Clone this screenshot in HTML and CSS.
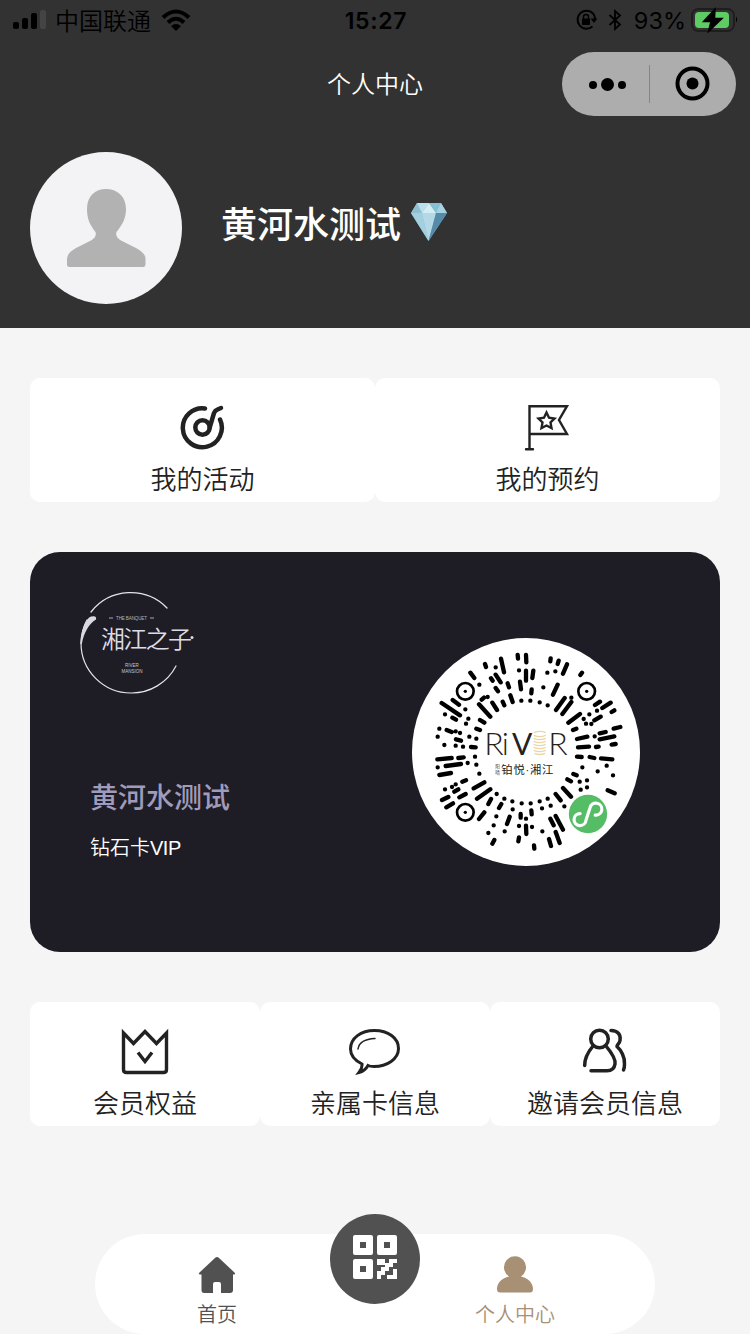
FILE: index.html
```html
<!DOCTYPE html>
<html lang="zh-CN">
<head>
<meta charset="utf-8">
<title>个人中心</title>
<link rel="stylesheet" href="styles.css">
</head>
<body>
<header class="header">
  <div class="status">
    <div class="status-left">
      <svg class="signal" width="34" height="20" viewBox="0 0 34 20"><rect x="0" y="12" width="6" height="7" rx="2"/><rect x="9" y="8" width="6" height="11" rx="2"/><rect x="18" y="3" width="6" height="16" rx="2"/><rect x="27" y="0" width="6" height="19" rx="2" fill="#444"/></svg>
      <span class="carrier">中国联通</span>
      <svg class="wifi" width="30" height="22" viewBox="0 0 30 22"><g fill="none" stroke="#000" stroke-width="4"><path d="M2 8.500Q15-3.500 28 8.500"/><path d="M7 13.500Q15 6 23 13.500"/></g><path d="M10 17Q15 13 20 17L15 22Z"/></svg>
    </div>
    <div class="time">15:27</div>
    <div class="status-right">
      <svg width="22" height="22" viewBox="0 0 22 22"><path d="M16.500 17.500A9 9 0 1 1 17.500 5Q19 7 19 10" fill="none" stroke="#000" stroke-width="2"/><path d="M14.500 9.500h7L18 14Z"/><rect x="6" y="9.500" width="8" height="6.500" rx="1"/><path d="M7.500 10V8a2.500 2.500 0 0 1 5 0v2" fill="none" stroke="#000" stroke-width="1.500"/></svg>
      <svg class="bluetooth" width="14" height="22" viewBox="0 0 14 22"><path d="M1.500 6L12 15.500 7 20V2l5 4.500L1.500 16" fill="none" stroke="#000" stroke-width="1.800"/></svg>
      <span class="percent">93%</span>
      <svg width="48" height="26" viewBox="0 0 48 26"><rect x="1" y="2" width="42" height="22" rx="6.500" fill="none" stroke="#1e1e1e" stroke-width="2"/><rect x="4" y="5" width="34" height="16" rx="4" fill="#5fcb64"/><path d="M45 9.500q2.500 3 0 6Z"/><path d="M24 2L12.500 14.500H20L17.500 24.500 31 11.500H23.500Z" stroke="#000" stroke-width="1.500"/></svg>
    </div>
  </div>
  <div class="nav">
    <h1 class="nav-title">个人中心</h1>
    <div class="capsule">
      <svg width="174" height="64" viewBox="0 0 174 64"><circle cx="31" cy="33" r="4"/><circle cx="45.500" cy="32.500" r="6.500"/><circle cx="60" cy="33" r="4"/><path d="M87.500 13v38" stroke="#858585"/><circle cx="130.500" cy="31.500" r="15" fill="none" stroke="#000" stroke-width="4"/><circle cx="130.500" cy="31.500" r="6"/></svg>
    </div>
  </div>
  <div class="profile">
    <svg class="avatar" width="152" height="152" viewBox="0 0 152 152"><circle cx="76" cy="76" r="76" fill="#f3f3f6"/><path d="M37 113V107Q37 101 46 96L61 88.500Q67 85 65.500 80C60 73 57 67 57 57C57 44 65 37 76 37S96 44 96 57C96 67 92 73 86.500 80Q85 85 91 88.500L106 96Q115 101 115.500 106V112Q115.500 115 113 115H39.500Q37 115 37 113Z" fill="#b2b2b2"/></svg>
    <span class="user-name">黄河水测试</span>
    <svg class="diamond" width="38" height="40" viewBox="0 0 38 40"><path d="M7 1H31L37 11 18.500 39 1 11Z" fill="#80b5cc"/><path d="M7 1L1 11H12Z" fill="#91bfd2"/><path d="M7 1H19L12 11Z" fill="#b9dfeb"/><path d="M19 1L12 11H26Z" fill="#d2eef5"/><path d="M19 1H31L26 11Z" fill="#85bfd4"/><path d="M31 1L26 11H37Z" fill="#a6d2e1"/><path d="M1 11H12L18.500 39Z" fill="#a4cfe0"/><path d="M12 11H26L18.500 39Z" fill="#b4d8e5"/><path d="M26 11H37L18.500 39Z" fill="#558ba8"/></svg>
  </div>
</header>

<main class="content">
  <section class="menu">
    <a class="menu-item">
      <svg width="48" height="48" viewBox="0 0 48 48" class="line heavy"><path d="M26 5.400A19.500 19.500 0 1 0 41 16.500"/><circle cx="23.500" cy="24.500" r="7.200"/><path d="M30.700 24.500L35 10Q36 7.500 38.500 6.500L42 5"/></svg>
      <span>我的活动</span>
    </a>
    <a class="menu-item">
      <svg width="48" height="48" viewBox="0 0 48 48" class="line flag"><path d="M5.500 46V3.200H43L35 17 43 31H5.500M2 46.200H9"/><path d="M22.500 9.500L25 14.700 30.500 15.500 26.500 19.500 27.500 25 22.500 22.500 17.500 25 18.500 19.500 14.500 15.500 20 14.700Z"/></svg>
      <span>我的预约</span>
    </a>
  </section>

  <section class="card">
    <div class="card-info">
      <svg class="brand" width="120" height="106" viewBox="0 0 120 106">
        <g fill="none" stroke="#e5e4ec" stroke-linecap="round"><path d="M11 22A50.500 50.500 0 0 1 87 18" stroke-width="1.300"/><path d="M7 30A50 50 0 0 0 1 53A50 50 0 0 0 51 103A50 50 0 0 0 96 76" stroke-width="1.200"/></g>
        <path d="M.4 54C1 41 5 29 11 26.500Q17 25 16 29.500C9 34 4 42 1.800 54Z" fill="#d8d7e2"/>
        <path d="M29 28h4M70 28h4" stroke="#aaa9b4"/>
        <text x="36" y="29.800" class="brand-tiny" textLength="31">THE BANQUET</text>
        <text x="21" y="58" class="brand-name" textLength="91">湘江之子</text>
        <circle cx="112" cy="47.500" r="1.500" fill="#dddce6"/>
        <text x="52" y="77" class="brand-small" text-anchor="middle">RIVER</text>
        <text x="52" y="83" class="brand-small" text-anchor="middle">MANSION</text>
      </svg>
      <div class="member-name">黄河水测试</div>
      <div class="member-level">钻石卡<span class="vip">VIP</span></div>
    </div>
    <svg class="code" width="228" height="228" viewBox="21 24 684 684">
      <circle cx="363" cy="366" r="342" fill="#fff"/>
      <path class="marks" d="M338 75L339 86M363 75L364 97M437 85L436 94M461 92L458 102M486 103L474 131M240 102L243 111M288 86L297 127M272 112h.1M196 128L208 144M342 121h.1M363 122V152M385 122L382 144M427 128h.1M451 124h.1M531 128L526 135M272 134L287 157M258 145L263 152M223 164h.1M345 155L348 178M308 160L312 172M415 172h.1M458 164L444 194M380 178L379 190M272 174L279 184M316 196L323 216M230 209L237 203M248 201h.1M262 218L276 240M293 215L298 226M349 212h.1M376 212h.1M404 217h.1M428 226h.1M499 203h.1M479 204L453 240M499 216L472 252M222 223L256 260M525 252L490 278"/>
      <path class="marks" d="M110 219L165 256M143 210L162 224M181 238h.1M120 253h.1M142 263L153 269M190 266h.1M183 281h.1M225 270L238 278M103 296h.1M125 300L140 306M98 320h.1M152 304h.1M165 309h.1M193 320h.1M214 296L225 300M214 326h.1M153 328L168 332M118 345h.1M152 347h.1M174 350h.1M198 351L212 352M97 388L140 384M160 384L176 382M210 380h.1M98 412h.1M122 408L168 402M188 399h.1M214 404h.1M103 435L138 429M223 431h.1M172 455L183 451M238 457L206 475M152 463h.1M120 478h.1M141 471h.1M111 510L130 501M148 485L160 478M163 502L182 492M124 532L144 520M256 478L216 506"/>
      <path class="marks" d="M275 492h.1M258 507L250 522M238 547L222 567M298 506h.1M289 522L282 534M322 514h.1M323 538h.1M350 520h.1M377 520h.1M404 514h.1M428 506h.1M347 552V563M379 541L380 553M411 535h.1M437 527h.1M452 492L467 511M474 474L498 500M478 529h.1M314 560L306 582M274 559h.1M266 586h.1M250 609h.1M268 630L262 641M299 604h.1M342 588h.1M342 622L340 634M363 587L364 612M363 566h.1M381 591h.1M387 646L388 656M412 604h.1M436 566L446 586M432 627L438 648M452 558L474 599M452 606L464 639"/>
      <path class="marks" d="M570 225L585 215M592 234L617 218M620 246L628 241M576 242h.1M553 253h.1M568 271L587 260M536 267h.1M543 281h.1M559 282h.1M504 300L514 296M516 327L547 320M569 319h.1M584 310L602 306M626 296L646 291M584 328L628 319M620 344L632 342M519 352L552 350M573 351L581 350M516 380L530 381M554 381L568 384M588 385L622 388M532 412h.1M605 407h.1M578 424h.1M624 436h.1M505 432L515 436M546 451h.1M546 472h.1M527 479h.1M487 448L498 454M524 455h.1M608 481L629 490"/>
      <g fill="none" stroke="#000" stroke-width="8"><circle cx="181" cy="184" r="25"/><circle cx="545" cy="184" r="25"/><circle cx="181" cy="547" r="25"/></g>
      <circle cx="181" cy="184" r="5"/><circle cx="545" cy="184" r="5"/><circle cx="181" cy="547" r="5"/>
      <text class="river" y="375"><tspan x="238">R</tspan><tspan x="290">i</tspan><tspan x="321" class="river-v">V</tspan><tspan x="430">R</tspan></text>
      <path d="M386 308q20-8 36 0M386 316q18 8 36 0M386 325q18 8 36 0M386 334q18 8 36 0M386 343q18 8 36 0M386 352q18 8 36 0M386 361q18 8 36 0M388 370q16 7 32 0" fill="none" stroke="#ecd6a8" stroke-width="4"/>
      <text x="271" y="415" class="code-mini">阳</text><text x="271" y="432" class="code-mini">晴</text>
      <text x="289" y="431" class="code-name" textLength="156">铂悦·湘江</text>
      <circle cx="549" cy="552" r="57.500" fill="#55bd66"/>
      <path d="M530 557A15 15 0 1 0 549 568V536A15 15 0 1 1 567 549" transform="translate(549 552) rotate(18) scale(1.200) translate(-549 -552)" fill="none" stroke="#fff" stroke-width="8" stroke-linecap="round"/>
    </svg>
  </section>

  <section class="menu">
    <a class="menu-item">
      <svg width="48" height="48" viewBox="0 0 48 48" class="line crown"><path d="M2.500 6L12.500 16.500 24 4.500 35.500 16.500 45.500 6V42.500Q45.500 45.500 42.500 45.500H5.500Q2.500 45.500 2.500 42.500Z"/><path d="M17 25.500L24 34.500 31 25.500"/></svg>
      <span>会员权益</span>
    </a>
    <a class="menu-item">
      <svg width="52" height="48" viewBox="0 0 52 48" class="line bubble"><path d="M13 37C5 33 1.500 28.500 1.500 22C1.500 11 12 3.500 25.500 3.500S49.500 11 49.500 21.500S38 39.500 25 39.500Q21 39.500 19 38.500Q16 44 10 45.500Q13.500 41 13 37Z"/><path d="M9 22C10 15 16 12 26 11.500" stroke-width="1.500"/></svg>
      <span>亲属卡信息</span>
    </a>
    <a class="menu-item">
      <svg width="48" height="48" viewBox="0 0 48 48" class="line members"><circle cx="18.500" cy="12" r="8.800"/><path d="M12 19C7 25 3.500 30.500 3.700 38.500"/><path d="M25 19C30 25 35 31.500 34 37Q33 43.800 26 43.800H10"/><path d="M30 3.500C37 3.500 40 8 39 13.500C38.500 17 35.500 18 36 19.500C40 23 44 30 43.500 37Q43.500 41 42.500 43"/></svg>
      <span>邀请会员信息</span>
    </a>
  </section>
</main>

<nav class="tabbar">
  <a class="tab">
    <svg width="38" height="38" viewBox="0 0 38 38"><path d="M17 2Q19 0 21 2L36.500 16.500Q38 18.500 36 18.500H35V34Q35 37 32 37H23V28Q23 26 21 26H17Q15 26 15 28V37H6Q3.500 37 3.500 34V18.500H2Q0 18.500 1.500 16.500Z" fill="#515151"/></svg>
    <span>首页</span>
  </a>
  <a class="tab active">
    <svg width="38" height="38" viewBox="0 0 38 38"><path d="M13 20.500A11 11 0 1 1 25 20.500C32 22 37 27 37 33Q37 36.500 34 36.500H4Q1 36.500 1 33C1 27 6 22 13 20.500Z" fill="#a89074"/></svg>
    <span>个人中心</span>
  </a>
  <div class="scan">
    <svg width="44" height="46" viewBox="0 0 44 46"><path fill="#fff" fill-rule="evenodd" d="M2 1H18Q20 1 20 3V19Q20 21 18 21H2Q0 21 0 19V3Q0 1 2 1ZM7 8V14H13V8ZM26 1H42Q44 1 44 3V19Q44 21 42 21H26Q24 21 24 19V3Q24 1 26 1ZM31 8V14H37V8ZM2 25H18Q20 25 20 27V43Q20 45 18 45H2Q0 45 0 43V27Q0 25 2 25ZM7 32V38H13V32Z"/><path fill="#fff" d="M24 25H32V29H36V25H44V29H40V33H36V37H32V41H28V45H24V37H28V33H32V31H24ZM40 35H44V45H34V41H40Z"/></svg>
  </div>
</nav>
</body>
</html>
```

FILE: styles.css
```css
* { box-sizing: border-box; }

body {
  margin: 0;
  width: 750px;
  height: 1334px;
  display: flex;
  flex-direction: column;
  overflow: hidden;
  background: #f5f5f5;
  color: #222;
  font-family: "Liberation Sans", "Noto Sans CJK SC", sans-serif;
}

svg { display: block; flex: none; }

.header { height: 328px; background: #323232; color: #fff; }

.status {
  display: grid;
  grid-template-columns: 1fr auto 1fr;
  align-items: center;
  height: 40px;
  padding: 0 11px 0 13px;
  color: #000;
  font-family: Inter, "Noto Sans CJK SC", sans-serif;
  font-size: 24px;
}
.status-left, .status-right { display: flex; align-items: center; }
.status-right { justify-content: flex-end; }
.carrier {
  margin: 0 10px 0 8px;
  font-family: "Noto Sans CJK SC", sans-serif;
  font-weight: 350;
  line-height: 36px;
}
.time { padding-top: 1px; font-weight: 600; font-size: 23px; letter-spacing: .7px; }
.bluetooth { margin: 0 12px 0 10px; }
.percent { margin: 1px 5px 0 0; font-size: 23.500px; }

.nav {
  display: grid;
  grid-template-columns: 1fr auto 1fr;
  align-items: center;
  height: 88px;
  padding-right: 14px;
  padding-left: 14px;
}
.nav-title {
  grid-column: 2;
  margin: 0 0 3px;
  font-family: "Noto Sans CJK SC", sans-serif;
  font-size: 24px;
  font-weight: 350;
  line-height: 36px;
}
.capsule { justify-self: end; border-radius: 32px; background: #adadad; }

.profile { display: flex; align-items: center; padding: 24px 30px 0; }
.user-name { margin: -4px 9px 0 39px; font-size: 36px; font-weight: 500; line-height: 54px; }
.diamond { margin-top: -12px; }

.content { display: flex; flex-direction: column; gap: 50px; padding: 50px 30px 0; }

.menu { display: flex; height: 124px; }
.menu-item {
  flex: 1;
  display: flex;
  flex-direction: column;
  align-items: center;
  padding-top: 25px;
  border-radius: 10px;
  background: #fff;
  font-family: "Noto Sans CJK SC", sans-serif;
  font-size: 26px;
  font-weight: 350;
  line-height: 38px;
}
.menu-item span { margin-top: 8px; }
.line { fill: none; stroke: #222; stroke-width: 3; stroke-linecap: round; }
.heavy { stroke-width: 4.500; }
.flag { stroke-width: 2.400; }
.crown { stroke-width: 3.400; stroke-linecap: butt; }
.members { stroke-width: 3.500; }

.card {
  display: flex;
  justify-content: space-between;
  height: 400px;
  padding: 38px 80px 0 50px;
  border-radius: 30px;
  background: #1e1d25;
}
.card-info { color: #fff; }
.brand { overflow: visible; }
.brand-tiny { font-size: 4.500px; fill: #b5b4bf; }
.brand-small { font-size: 4.500px; fill: #c6c5cf; }
.brand-name { font-family: "Noto Sans CJK SC", sans-serif; font-size: 24px; font-weight: 350; fill: #dddce6; }
.member-name { margin: 82px 0 0 10px; color: #a09bbb; font-size: 28px; font-weight: 500; line-height: 42px; }
.member-level {
  margin: 12px 0 0 10px;
  font-family: "Noto Sans CJK SC", sans-serif;
  font-size: 20px;
  font-weight: 350;
  line-height: 30px;
}
.vip { font-family: "Liberation Sans", sans-serif; letter-spacing: -.5px; }

.code { margin-top: 48px; }
.marks { fill: none; stroke: #000; stroke-width: 13; stroke-linecap: round; }
.river { font-family: Lato, sans-serif; font-size: 96px; font-weight: 300; fill: #222; }
.river-v { font-weight: 400; font-size: 90px; }
.code-name { font-family: "Liberation Sans", "Noto Sans CJK SC", sans-serif; font-size: 34px; fill: #222; }
.code-mini { font-family: "Noto Sans CJK SC", sans-serif; font-size: 14px; fill: #444; }

.tabbar {
  position: relative;
  display: flex;
  justify-content: space-between;
  width: 560px;
  height: 100px;
  margin: auto auto 0;
  padding: 22px 100px 0 82px;
  border-radius: 50px;
  background: #fff;
}
.tab {
  display: flex;
  flex-direction: column;
  align-items: center;
  width: 80px;
  color: #515151;
  font-family: "Noto Sans CJK SC", sans-serif;
  font-size: 20px;
  font-weight: 350;
  line-height: 30px;
}
.tab span { margin-top: 5px; }
.active { color: #a89074; }
.scan {
  position: absolute;
  top: -20px;
  left: 235px;
  display: flex;
  justify-content: center;
  width: 90px;
  height: 90px;
  padding-top: 20px;
  border-radius: 50%;
  background: #515151;
}
```
